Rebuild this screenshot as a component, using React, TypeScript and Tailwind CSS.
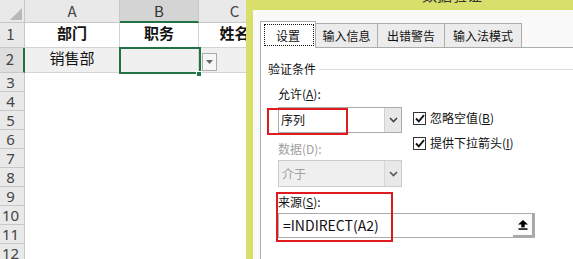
import React from "react";

const CJK = { fontFamily: '"Noto Sans CJK SC", "Noto Sans", sans-serif' };

function Chevron({ color = "#444" }: { color?: string }) {
  return (
    <svg width="9" height="6" viewBox="0 0 9 6">
      <polyline points="1,1 4.5,4.5 8,1" fill="none" stroke={color} strokeWidth="1.6" />
    </svg>
  );
}

function Check() {
  return (
    <div className="w-[13px] h-[13px] border border-[#333] bg-white flex items-center justify-center">
      <svg width="10" height="9" viewBox="0 0 10 9">
        <polyline points="1,4.5 3.8,7.3 9,1.2" fill="none" stroke="#111" strokeWidth="1.8" />
      </svg>
    </div>
  );
}

function Sheet() {
  const hdr = "bg-[#e9e9e9] border-r border-b border-[#c8c8c8] flex items-center justify-center text-[15px] text-[#444]";
  const rows = [3, 4, 5, 6, 7, 8, 9, 10, 11, 12];
  return (
    <div className="w-[246px] shrink-0 overflow-hidden bg-white" style={CJK}>
      <div className="w-[271px] grid grid-cols-[25px_95px_79px_72px]">
        <div className="h-[23px] bg-[#e9e9e9] border-r border-b border-[#c8c8c8] relative">
          <svg className="absolute left-0 top-0" width="24" height="22" viewBox="0 0 24 22">
            <polygon points="10,20 22,20 22,8" fill="#b8b8b8" />
          </svg>
        </div>
        <div className={`h-[23px] ${hdr}`}>A</div>
        <div className="h-[23px] bg-[#d4d4d4] border-r border-[#c8c8c8] border-b-2 border-b-[#217346] flex items-center justify-center text-[15px] text-[#333] pt-[1px]">B</div>
        <div className={`h-[23px] ${hdr}`}>C</div>

        <div className="h-[25px] bg-[#e9e9e9] border-r border-b border-[#c8c8c8] flex items-end justify-center pr-[3px] pb-[2px] text-[15px] text-[#444]">1</div>
        <div className="h-[25px] border-r border-b border-[#d4d4d4] flex items-end justify-center pb-[3px] text-[15px] font-bold text-[#111]">部门</div>
        <div className="h-[25px] border-r border-b border-[#d4d4d4] flex items-end justify-center pb-[3px] text-[15px] font-bold text-[#111]">职务</div>
        <div className="h-[25px] border-r border-b border-[#d4d4d4] flex items-end justify-center pb-[3px] text-[15px] font-bold text-[#111]">姓名</div>

        <div className="h-[25px] bg-[#dedede] border-r-2 border-r-[#217346] border-b border-b-[#c8c8c8] flex items-end justify-center pr-[3px] pb-[2px] text-[15px] text-[#444]">2</div>
        <div className="h-[25px] bg-[#f0f0f0] border-r border-b border-[#d4d4d4] flex items-end justify-center pb-[3px] text-[15px] text-[#111]">销售部</div>
        <div className="h-[25px] bg-[#f0f0f0] border-r border-b border-[#d4d4d4] relative z-10">
          <div className="absolute left-[-1px] top-[-1px] w-[82px] h-[27px] border-2 border-[#217346]" />
          <div className="absolute left-[76px] top-[23px] w-[6px] h-[6px] bg-[#217346] border border-white" />
          <div className="absolute left-[82px] top-[5px] w-[15px] h-[18px] bg-[#f7f7f7] border border-[#ababab] flex items-center justify-center">
            <svg width="7" height="4" viewBox="0 0 7 4">
              <polygon points="0,0 7,0 3.5,4" fill="#666" />
            </svg>
          </div>
        </div>
        <div className="h-[25px] bg-[#f0f0f0] border-r border-b border-[#d4d4d4]" />

        {rows.map((r) => (
          <React.Fragment key={r}>
            <div className="h-[19px] bg-[#e9e9e9] border-r border-b border-[#c8c8c8] flex items-center justify-center pr-[3px] text-[15px] leading-none text-[#444]" style={{ fontFamily: '"Noto Sans", sans-serif' }}>{r}</div>
            <div className="h-[19px]" />
            <div className="h-[19px]" />
            <div className="h-[19px]" />
          </React.Fragment>
        ))}
      </div>
    </div>
  );
}

function Dialog() {
  return (
    <div className="flex-1 flex flex-col bg-[#d8df6b] overflow-hidden" style={CJK}>
      <div className="h-[10px] overflow-hidden pl-[176px]">
        <div className="h-[17px] -mt-[13px] flex items-center text-[15px] text-[#333] whitespace-nowrap">数据验证</div>
      </div>
      <div className="flex-1 ml-[7px] bg-[#f9f9f9] pl-[7px] pt-[11px] flex flex-col">
        <div className="flex items-end h-[27px] -mb-px relative z-10 text-[12px] text-[#111]">
          <div className="w-[56px] h-[27px] bg-white border border-b-0 border-[#acacac] relative flex items-center justify-center pt-px">
            <div className="absolute left-[3px] right-[1px] top-[2px] bottom-[2px] border border-dotted border-[#111]" />
            设置
          </div>
          <div className="w-[62px] h-[25px] bg-[#ececec] border-t border-r border-b border-[#acacac] flex items-center justify-center">输入信息</div>
          <div className="w-[67px] h-[25px] bg-[#ececec] border-t border-r border-b border-[#acacac] flex items-center justify-center">出错警告</div>
          <div className="w-[77px] h-[25px] bg-[#ececec] border-t border-r border-b border-[#acacac] flex items-center justify-center">输入法模式</div>
        </div>
        <div className="flex-1 bg-white border-l border-t border-[#acacac] pt-[13px] relative text-[12px] text-[#111]">
          <div className="flex items-center h-[16px] pl-[7px]">
            <span className="whitespace-nowrap">验证条件</span>
            <div className="flex-1 ml-[3px] h-px bg-[#dcdcdc]" />
          </div>

          <div className="flex pl-[17px] mt-[9px]">
            <div className="w-[124px] flex flex-col">
              <div className="h-[16px] flex items-center whitespace-nowrap">允许(<span className="underline">A</span>):</div>
              <div className="mt-[5px] h-[26px] border border-[#acacac] bg-white flex">
                <div className="flex-1 flex items-center pl-[2px]">序列</div>
                <div className="w-[17px] bg-[#e8e8e8] border-l border-[#cfcfcf] flex items-center justify-center">
                  <Chevron />
                </div>
              </div>
              <div className="mt-[8px] h-[16px] flex items-center whitespace-nowrap text-[#a0a0a0]">数据(D):</div>
              <div className="mt-[3px] h-[27px] border border-[#cccccc] bg-[#efefef] flex">
                <div className="flex-1 flex items-center pl-[3px] text-[#a0a0a0]">介于</div>
                <div className="w-[17px] bg-[#e8e8e8] border-l border-[#d6d6d6] flex items-center justify-center">
                  <Chevron color="#555" />
                </div>
              </div>
            </div>
            <div className="ml-[11px] pt-[25px] flex flex-col gap-[11px]">
              <div className="h-[14px] flex items-center gap-[4px] whitespace-nowrap">
                <Check />
                <span>忽略空值(<span className="underline">B</span>)</span>
              </div>
              <div className="h-[14px] flex items-center gap-[4px] whitespace-nowrap">
                <Check />
                <span>提供下拉箭头(<span className="underline">I</span>)</span>
              </div>
            </div>
          </div>

          <div className="pl-[17px] mt-[7px]">
            <div className="h-[16px] flex items-center whitespace-nowrap">来源(<span className="underline">S</span>):</div>
            <div className="mt-[3px] w-[257px] h-[25px] border border-[#acacac] bg-white flex">
              <div className="flex-1 flex items-center pl-[4px] text-[14px] text-[#111]">=INDIRECT(A2)</div>
              <div className="w-[21px] bg-[#fbfbfb] border-r-2 border-b-2 border-[#a8a8a8] flex items-center justify-center">
                <svg width="10" height="10" viewBox="0 0 10 10">
                  <polygon points="5,0 0,4.5 10,4.5" fill="#000" />
                  <rect x="3.3" y="4" width="3.4" height="3.4" fill="#000" />
                  <rect x="0.5" y="8.3" width="9" height="1.5" fill="#000" />
                </svg>
              </div>
            </div>
          </div>

          <div className="absolute left-[6px] top-[60px] w-[81px] h-[27px] border-2 border-[#e11a1f]" />
          <div className="absolute left-[15px] top-[144px] w-[117px] h-[50px] border-2 border-[#e11a1f]" />
        </div>
      </div>
    </div>
  );
}

export default function App() {
  return (
    <div className="flex w-[573px] h-[259px] overflow-hidden bg-white">
      <Sheet />
      <Dialog />
    </div>
  );
}
